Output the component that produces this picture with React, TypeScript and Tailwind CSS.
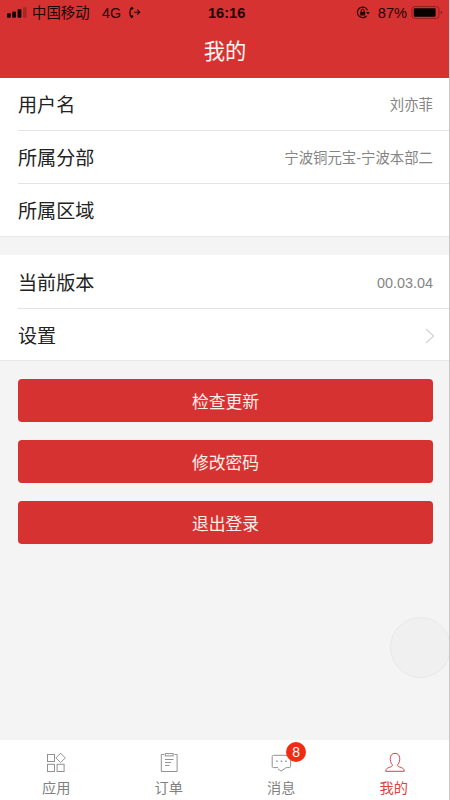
import React from 'react';

type RowProps = { label: string; value?: string; chevron?: boolean; last?: boolean };

function Row({ label, value, chevron, last }: RowProps) {
  return (
    <div className={`flex h-[53px] items-center justify-between border-b pr-[16px] ${last ? 'border-transparent' : 'border-[#e3e3e3]'}`}>
      <span className="pt-[4px] text-[19.1px] leading-[26px] text-[#222222]">{label}</span>
      {value && <span className="pt-[1px] text-[14.4px] leading-5 text-[#858585]">{value}</span>}
      {chevron && (
        <svg className="-mr-[2px] mt-[2px]" width="10" height="16" viewBox="0 0 10 16" fill="none" stroke="#d2d2d2" strokeWidth="1.2">
          <path d="M1 1 8.5 8 1 15" />
        </svg>
      )}
    </div>
  );
}

function ActionButton({ children }: { children: React.ReactNode }) {
  return (
    <button className="flex h-[43px] w-full items-center justify-center rounded-[4px] bg-[#d73232] pt-[4px] text-[16.8px] leading-6 text-[#ffeeea]">
      {children}
    </button>
  );
}

function StatusBar() {
  return (
    <div className="flex h-[25px] items-center text-[14.4px] leading-5 text-[#210505]">
      <div className="flex w-[208px] items-center pl-[7px]">
        <svg width="20" height="11" viewBox="0 0 20 11" fill="#160202">
          <rect x="0" y="6.3" width="3.8" height="4.4" rx="1" />
          <rect x="5.2" y="4.5" width="3.8" height="6.2" rx="1" />
          <rect x="10.6" y="2" width="3.8" height="8.7" rx="1" />
          <rect x="16" y="0.2" width="3.6" height="10.5" rx="1" fillOpacity="0.25" />
        </svg>
        <span className="ml-[5px]">中国移动</span>
        <span className="ml-[12.5px] text-[14.2px]">4G</span>
        <svg className="ml-[7px]" width="14" height="13" viewBox="0 0 14 13" fill="none" stroke="#210505">
          <path d="M4 1.2C1.2 3.8 1.2 9 4 11.6" strokeWidth="1.5" />
          <path d="M3.4 1.3 4.7 3.3M3.4 11.5l1.3-2" strokeWidth="2.2" />
          <path d="M6.3 6.2h5.3M9.2 3.7l2.6 2.5-2.6 2.5" strokeWidth="1.1" />
        </svg>
      </div>
      <span className="w-[38px] text-[14.6px] font-bold">16:16</span>
      <div className="flex flex-1 items-center justify-end pr-[7px]">
        <svg className="mr-[8px]" width="14" height="13" viewBox="0 0 14 13" fill="none" stroke="#210505">
          <path d="M11.6 4.2A5.3 5.3 0 1 0 10.6 10" strokeWidth="1.2" />
          <path d="m10 6 2 2.6L13.8 6Z" fill="#210505" stroke="none" />
          <rect x="4.2" y="5.7" width="5" height="3.8" rx=".5" fill="#210505" stroke="none" />
          <path d="M5.2 6V4.7a1.5 1.5 0 0 1 3 0V6" />
        </svg>
        <span className="mr-[4px] text-[14.6px]">87%</span>
        <svg width="32" height="13" viewBox="0 0 32 13">
          <rect x="1" y=".6" width="27" height="11.8" rx="2.6" fill="none" stroke="#951f1f" />
          <rect x="2.8" y="2.3" width="21.8" height="8.4" rx="1" fill="#090000" />
          <path d="M29.8 4.5c1.5.7 1.5 3.3 0 4z" fill="#7f1a1a" />
        </svg>
      </div>
    </div>
  );
}

function AppsIcon() {
  return (
    <svg width="22" height="22" viewBox="0 0 22 22" fill="none" stroke="#929292">
      <rect x="2.5" y="2.5" width="7" height="7" />
      <rect x="2.5" y="12.3" width="7" height="7.2" />
      <rect x="12.1" y="12.3" width="7" height="7.2" />
      <path d="m15.6 1.2 4.7 4.7-4.7 4.7-4.7-4.7Z" />
    </svg>
  );
}

function OrderIcon() {
  return (
    <svg width="22" height="22" viewBox="0 0 22 22" fill="none" stroke="#929292">
      <path d="M6 2.5H3.3v17h15.8v-17h-2.6" />
      <rect x="7.2" y="1.6" width="8" height="2.3" />
      <path d="M7 7.5h8.5M7 10.5h6M7 13.4h4.5" />
    </svg>
  );
}

function MessageIcon() {
  return (
    <svg width="22" height="22" viewBox="0 0 22 22" fill="none" stroke="#929292">
      <path d="M8 15.6H3.5q-1.3 0-1.3-1.3V4.6q0-1.3 1.3-1.3h15.8q1.3 0 1.3 1.3v9.7q0 1.3-1.3 1.3h-3.1l-5.1 3.5-3.1-2.2" />
      <path d="M6.2 9.3h1.5M10.7 9.3h1.5M15.2 9.3h1.5" strokeWidth="1.5" />
    </svg>
  );
}

function ProfileIcon() {
  return (
    <svg width="22" height="22" viewBox="-1 0 22 22" fill="none" stroke="#d84444">
      <path d="M8.2 12.6C5.4 9.5 5 1.3 11 1.3s5.6 8.2 2.8 11.3c-.5 1.2.2 1.9 1.5 2.3 2.8.8 4.8 1.4 5 4.4H1.7c.2-3 2.2-3.6 5-4.4 1.3-.4 2-1.1 1.5-2.3Z" />
    </svg>
  );
}

function Tab({ label, icon, badge, active }: { label: string; icon: React.ReactNode; badge?: string; active?: boolean }) {
  return (
    <div className={`flex flex-1 flex-col items-center pt-[12px] ${active ? 'text-[#d84444]' : 'text-[#808080]'}`}>
      <div className="relative">
        {icon}
        {badge && (
          <span className="absolute -top-[10px] left-[16px] flex h-[20px] w-[20px] items-center justify-center rounded-full bg-[#f52a12] text-[14px] leading-none text-white">
            {badge}
          </span>
        )}
      </div>
      <span className="mt-[4px] text-[14.2px] leading-5">{label}</span>
    </div>
  );
}

export default function App() {
  return (
    <div className="relative flex h-[800px] w-[450px] flex-col overflow-hidden border-r border-[#c9c9c9] bg-[#f4f4f4] font-['Liberation_Sans','Noto_Sans_CJK_SC',sans-serif]">
      <header className="-mr-px h-[78px] shrink-0 bg-[#d73232]">
        <StatusBar />
        <h1 className="pt-[12px] text-center text-[21.3px] leading-[30px] text-[#fff4f2]">我的</h1>
      </header>
      <section className="h-[159px] border-b border-[#e8e8e8] bg-white pl-[18px]">
        <Row label="用户名" value="刘亦菲" />
        <Row label="所属分部" value="宁波铜元宝-宁波本部二" />
        <Row label="所属区域" last />
      </section>
      <section className="mt-[18px] h-[106px] border-b border-[#e8e8e8] bg-white pl-[18px] pt-[1px]">
        <Row label="当前版本" value="00.03.04" />
        <Row label="设置" chevron last />
      </section>
      <main className="flex flex-1 flex-col gap-[18px] pl-[18px] pr-[16px] pt-[18px]">
        <ActionButton>检查更新</ActionButton>
        <ActionButton>修改密码</ActionButton>
        <ActionButton>退出登录</ActionButton>
      </main>
      <div className="absolute left-[390px] top-[617px] h-[61px] w-[61px] rounded-full border border-[#e8e8e8] bg-[#f0f0f0]" />
      <nav className="-mr-px flex h-[60px] shrink-0 bg-white">
        <Tab label="应用" icon={<AppsIcon />} />
        <Tab label="订单" icon={<OrderIcon />} />
        <Tab label="消息" icon={<MessageIcon />} badge="8" />
        <Tab label="我的" icon={<ProfileIcon />} active />
      </nav>
    </div>
  );
}
